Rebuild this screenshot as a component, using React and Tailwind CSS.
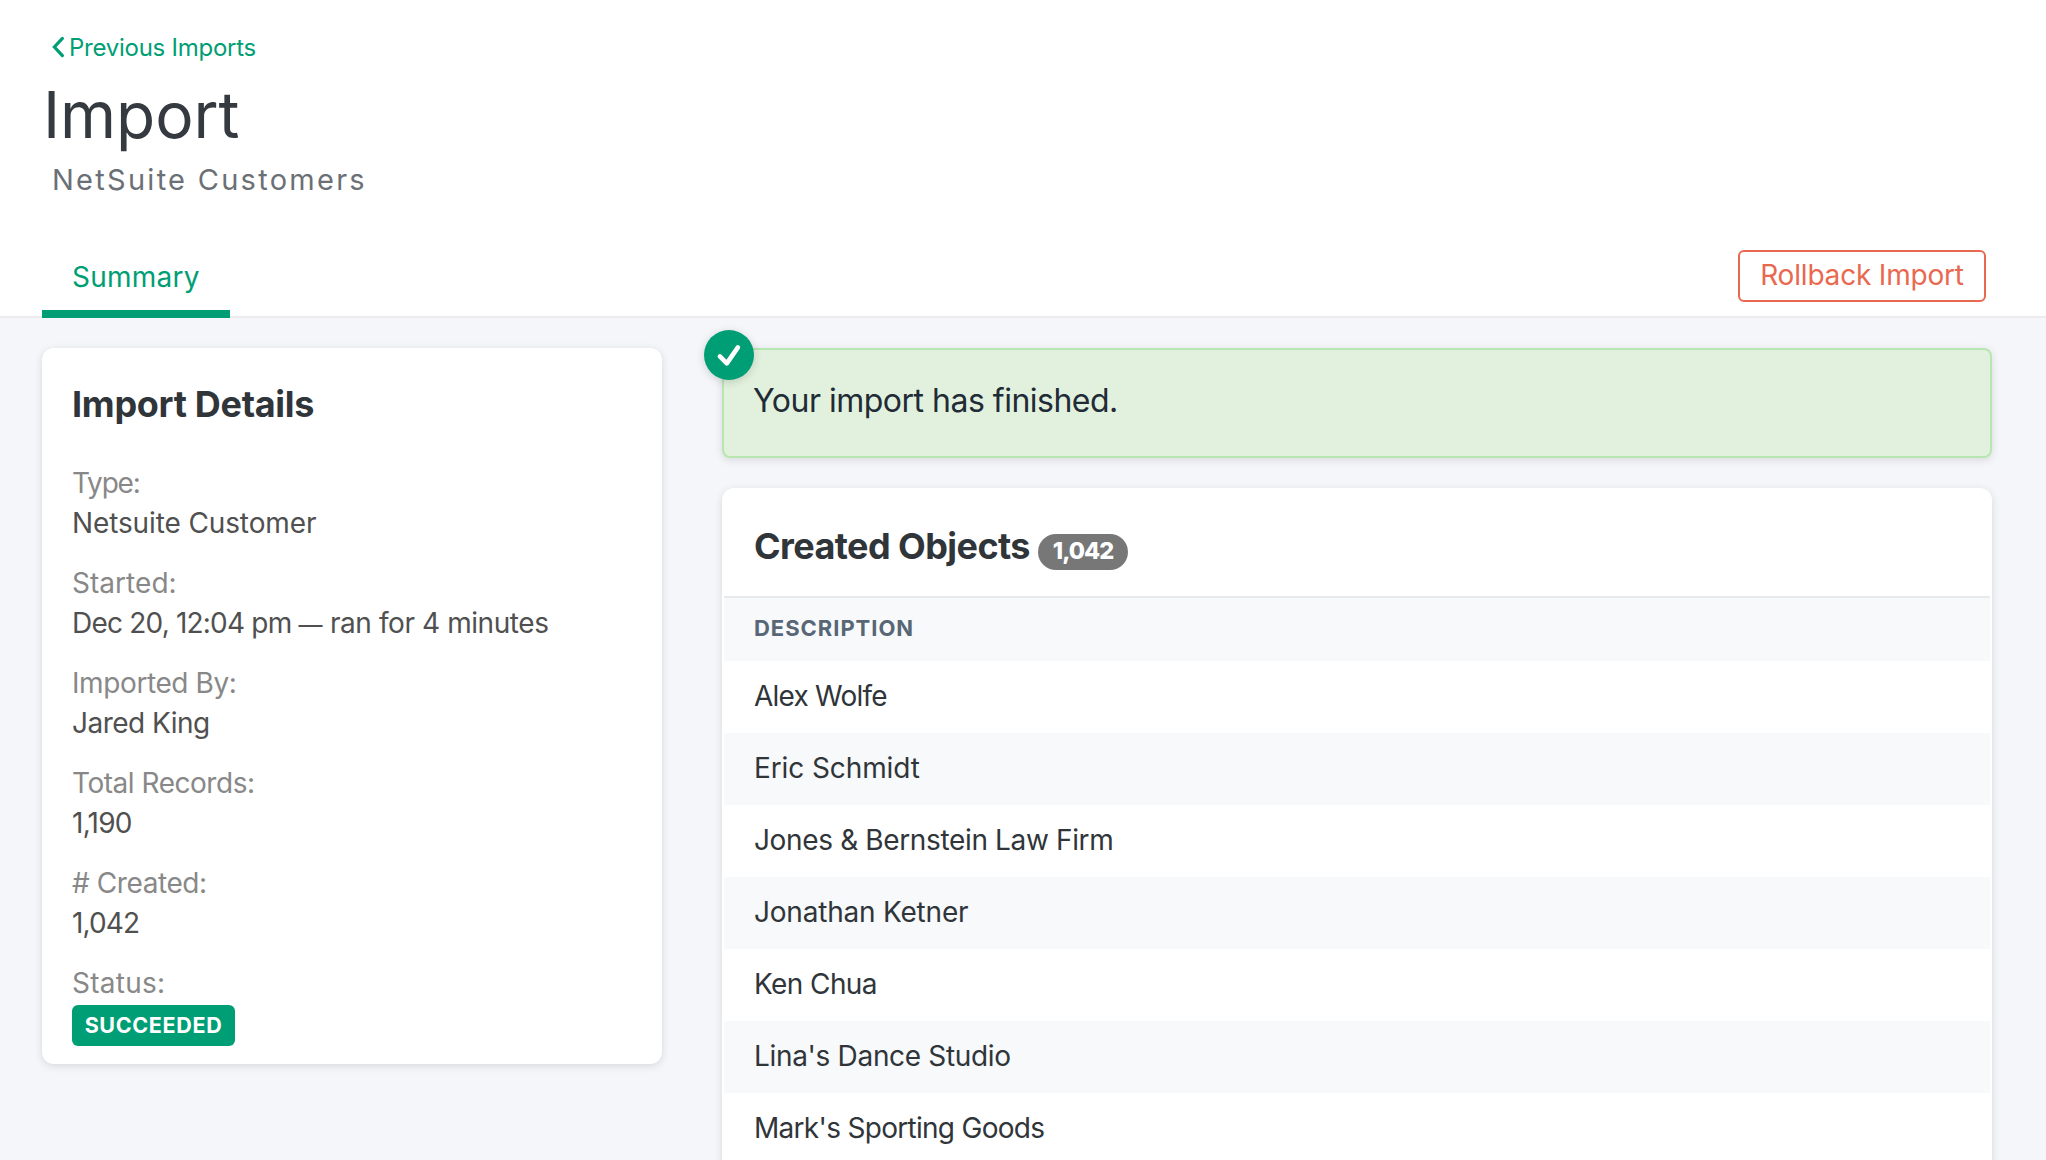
import React from "react";

const started = (
  <>
    <span className="tracking-[-0.8px]">Dec 20, 12:04 pm </span>
    <span className="text-[24px] leading-none">—</span>
    <span className="tracking-[-0.42px]"> ran for 4 minutes</span>
  </>
);

const details = [
  { label: "Type:", lt: "tracking-[-1.2px]", value: "Netsuite Customer", vt: "tracking-[-0.12px]" },
  { label: "Started:", lt: "tracking-[0.04px]", value: started, vt: "" },
  { label: "Imported By:", lt: "tracking-[-0.4px]", value: "Jared King", vt: "tracking-[-0.52px]" },
  { label: "Total Records:", lt: "tracking-[-0.47px]", value: "1,190", vt: "tracking-[-0.75px]" },
  { label: "# Created:", lt: "tracking-[-0.42px]", value: "1,042", vt: "tracking-[-0.87px]" },
];

const rows = [
  { name: "Alex Wolfe", t: "tracking-[-0.77px]" },
  { name: "Eric Schmidt", t: "tracking-[-0.1px]" },
  { name: "Jones & Bernstein Law Firm", t: "tracking-[-0.36px]" },
  { name: "Jonathan Ketner", t: "tracking-[-0.21px]" },
  { name: "Ken Chua", t: "tracking-[-0.6px]" },
  { name: "Lina's Dance Studio", t: "tracking-[-0.33px]" },
  { name: "Mark's Sporting Goods", t: "tracking-[-0.71px]" },
];

const cardShadow = "shadow-[0_2px_8px_rgba(0,0,0,0.12)]";

function Header() {
  return (
    <header className="flex h-[318px] shrink-0 flex-col border-b-2 border-[#ececec] bg-white pt-[33px] pl-[42px] pr-[60px]">
      <a className="flex h-[30px] items-center pl-[9px] text-[24px] leading-[30px] tracking-[-0.25px] text-[#009e74]">
        <svg className="relative -top-px mr-1 h-[22px] w-[14px]" viewBox="0 0 14 22" fill="none" stroke="currentColor" strokeWidth="3.2" strokeLinecap="round" strokeLinejoin="miter">
          <path d="M11.4 2.4 3.4 11l8 8.6" />
        </svg>
        Previous Imports
      </a>
      <h1 className="mt-[17px] pl-px text-[64px] leading-[70px] tracking-[-0.1px] text-[#343a40]">Import</h1>
      <div className="mt-[10px] pl-[10px] text-[29px] leading-10 tracking-[2.27px] text-[#6a7075]">NetSuite Customers</div>
      <div className="mt-auto -mb-0.5 flex items-end justify-between">
        <div className="w-[188px] border-b-8 border-[#009e74] pb-[13px] pl-[30px] text-[28px] leading-10 tracking-[0.25px] text-[#009e74]">
          Summary
        </div>
        <button className="mb-4 h-[52px] w-[248px] rounded-md border-2 border-[#e8694f] pb-0.5 text-[28px] leading-10 tracking-[-0.19px] text-[#e8694f]">
          Rollback Import
        </button>
      </div>
    </header>
  );
}

function ImportDetails() {
  return (
    <section className={`h-[716px] w-[620px] shrink-0 rounded-xl bg-white px-[30px] pt-9 ${cardShadow}`}>
      <h2 className="text-[36px] font-bold leading-10 tracking-[-0.29px] text-[#30353a]">Import Details</h2>
      <dl className="mt-[39px] flex flex-col gap-5 text-[28px] leading-10">
        {details.map((d) => (
          <div key={d.label}>
            <dt className={`text-[#888888] ${d.lt}`}>{d.label}</dt>
            <dd className={`h-10 text-[#505050] ${d.vt}`}>{d.value}</dd>
          </div>
        ))}
        <div>
          <dt className="tracking-[0.25px] text-[#888888]">Status:</dt>
          <dd className="mt-0.5 flex h-[41px] w-[163px] items-center justify-center rounded-md bg-[#009e74] pb-px text-[21.5px] font-bold tracking-[0.65px] text-white">
            SUCCEEDED
          </dd>
        </div>
      </dl>
    </section>
  );
}

function Alert() {
  return (
    <div className={`relative h-[110px] rounded-lg border-2 border-[#b8e6b0] bg-[#e2f1de] pt-[31px] pl-[29px] ${cardShadow}`}>
      <div className="absolute -top-5 -left-5 flex size-[50px] items-center justify-center rounded-full bg-[#009e74] shadow-[0_2px_8px_rgba(0,0,0,0.16)]">
        <svg className="size-[50px]" viewBox="0 0 50 50" fill="none" stroke="#fff" strokeWidth="4.6" strokeLinecap="round" strokeLinejoin="round">
          <path d="M15.9 26.4 22.8 33.4 33.9 17.4" />
        </svg>
      </div>
      <p className="text-[32px] leading-10 tracking-[-0.5px] text-[#212b35]">Your import has finished.</p>
    </div>
  );
}

function CreatedObjects() {
  return (
    <section className={`h-[760px] rounded-t-xl bg-white px-0.5 ${cardShadow}`}>
      <div className="flex h-[110px] items-start border-b-2 border-[#e8e9ea] pt-[38px] pl-[30px]">
        <h2 className="text-[36px] font-bold leading-10 tracking-[-0.57px] text-[#30353a]">Created Objects</h2>
        <span className="mt-2 ml-2 flex h-9 w-[90px] items-center justify-center rounded-full bg-[#777777] pb-0.5 text-[23.5px] font-extrabold tracking-[-1px] text-white">
          1,042
        </span>
      </div>
      <div className="h-[63px] bg-[#f7f9fb] pt-[10px] pl-[30px] text-[22px] font-bold leading-10 tracking-[0.97px] text-[#576775]">
        DESCRIPTION
      </div>
      <ul>
        {rows.map((r) => (
          <li key={r.name} className={`h-[72px] pt-[15px] pl-[30px] text-[28px] leading-10 text-[#30353a] odd:bg-white even:bg-[#f7f9fb] ${r.t}`}>
            {r.name}
          </li>
        ))}
      </ul>
    </section>
  );
}

export default function App() {
  return (
    <div className="flex h-[1160px] w-full flex-col overflow-hidden bg-[#f4f6fa] font-['Inter',sans-serif]">
      <Header />
      <main className="flex items-start gap-[60px] pt-[30px] pl-[42px] pr-[54px]">
        <ImportDetails />
        <div className="flex flex-1 flex-col gap-[30px]">
          <Alert />
          <CreatedObjects />
        </div>
      </main>
    </div>
  );
}
